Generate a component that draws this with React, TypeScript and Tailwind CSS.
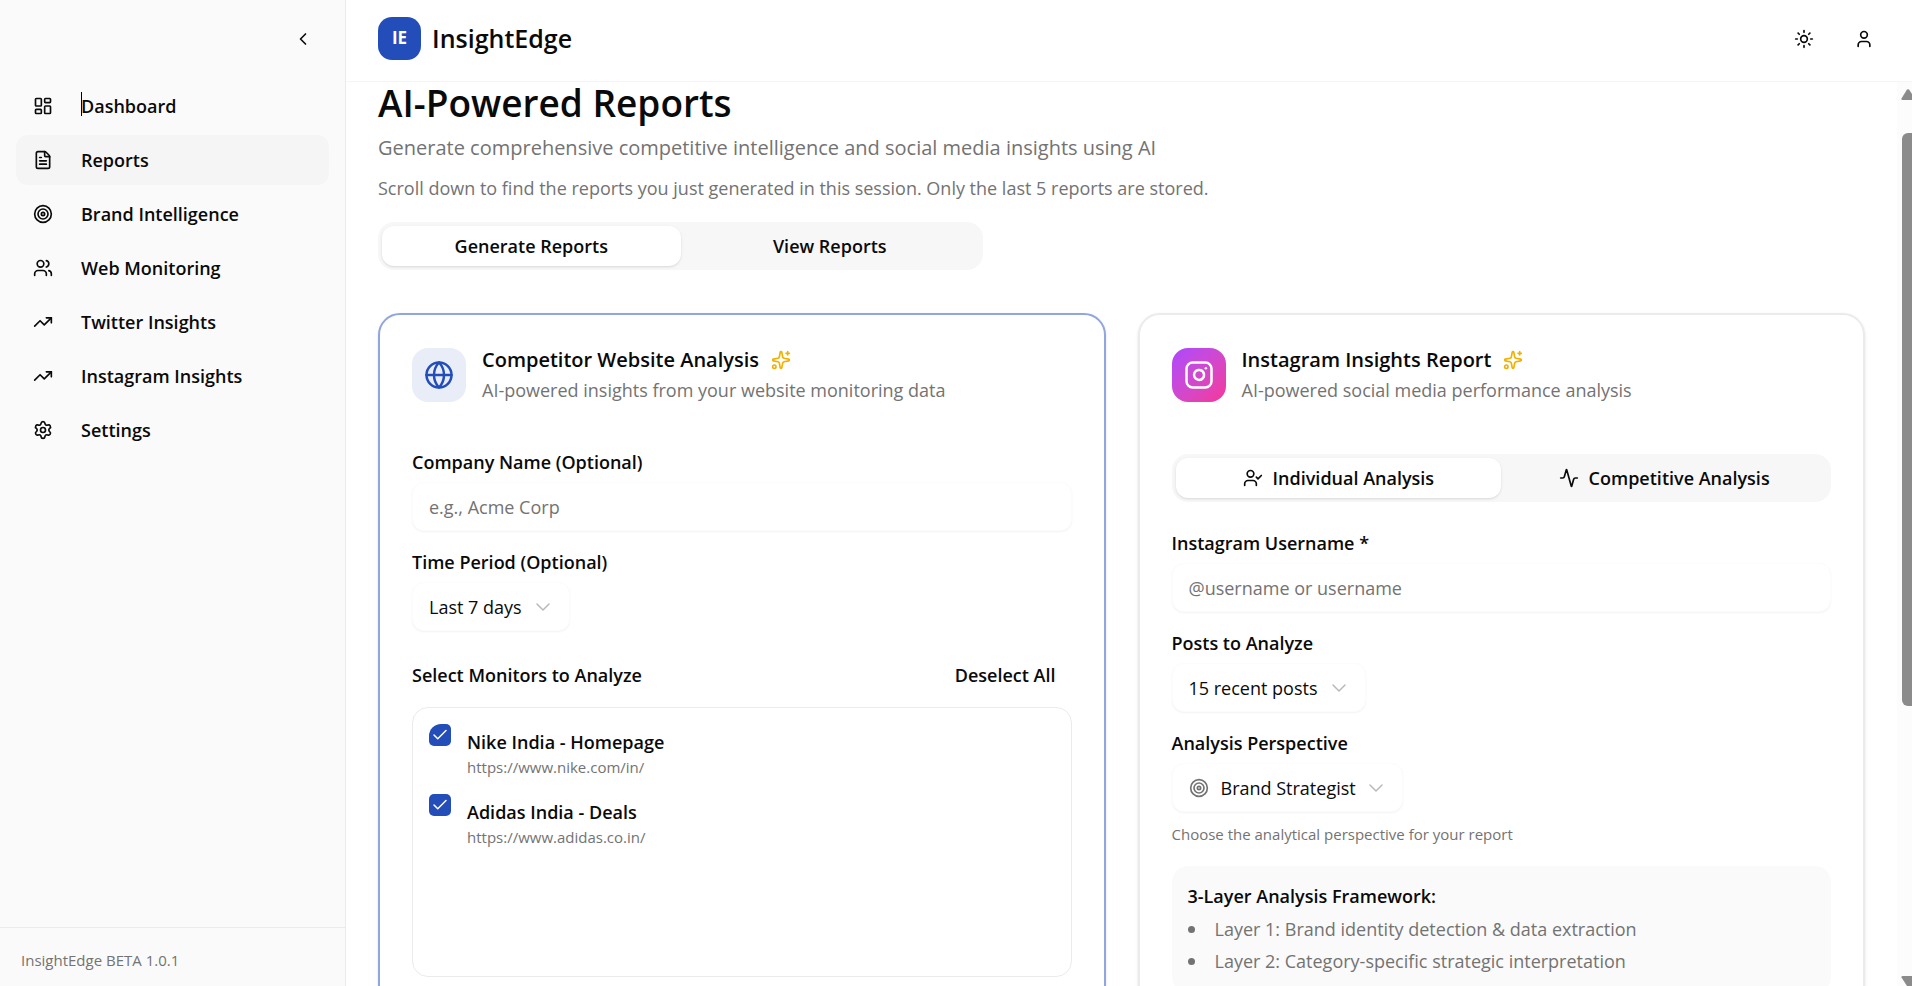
import React, { useState } from "react";
import {
  Activity,
  ChevronDown,
  ChevronLeft,
  FileText,
  Globe,
  Instagram,
  LayoutDashboard,
  Settings,
  Sparkles,
  Sun,
  Target,
  TrendingUp,
  User,
  UserCheck,
  Users,
  Check,
} from "lucide-react";
import type { LucideIcon } from "lucide-react";

const navItems: { label: string; icon: LucideIcon }[] = [
  { label: "Dashboard", icon: LayoutDashboard },
  { label: "Reports", icon: FileText },
  { label: "Brand Intelligence", icon: Target },
  { label: "Web Monitoring", icon: Users },
  { label: "Twitter Insights", icon: TrendingUp },
  { label: "Instagram Insights", icon: TrendingUp },
  { label: "Settings", icon: Settings },
];

const monitors = [
  { id: "nike", name: "Nike India - Homepage", url: "https://www.nike.com/in/" },
  { id: "adidas", name: "Adidas India - Deals", url: "https://www.adidas.co.in/" },
];

const Sidebar: React.FC = () => {
  return (
    <aside className="flex w-[346px] shrink-0 flex-col border-r border-[#ebebeb] bg-[#fafafa]">
      <div className="flex h-[81px] items-center justify-end pr-7 pb-1">
        <button aria-label="Collapse sidebar" className="p-1">
          <ChevronLeft className="size-5" />
        </button>
      </div>
      <nav className="flex flex-1 flex-col gap-1 px-4">
        {navItems.map(({ label, icon: Icon }) => (
          <a
            key={label}
            href="#"
            className={`flex h-[50px] items-center gap-7 rounded-xl px-[17px] font-semibold ${
              label === "Reports" ? "bg-[#f5f5f5]" : ""
            }`}
          >
            <Icon className="size-5" />
            <span className={label === "Dashboard" ? "relative" : ""}>
              {label === "Dashboard" && <span className="absolute left-0 top-0 h-6 w-px bg-black" />}
              {label}
            </span>
          </a>
        ))}
      </nav>
      <div className="flex h-[59px] items-center border-t border-[#ebebeb] px-[21px] pt-2 text-[15px] text-[#737373]">
        InsightEdge BETA 1.0.1
      </div>
    </aside>
  );
};

const Header: React.FC = () => {
  return (
    <header className="flex h-[82px] shrink-0 items-center justify-between border-b border-[#f5f5f5] px-8 pb-1">
      <div className="flex items-center gap-[11px]">
        <div className="flex size-[43px] items-center justify-center rounded-[14px] bg-[#234eba] text-[17px] font-bold text-white">
          IE
        </div>
        <span className="text-[25px] font-semibold">InsightEdge</span>
      </div>
      <div className="flex items-center gap-8 pr-0.5">
        <button aria-label="Toggle theme" className="p-1">
          <Sun className="size-5" />
        </button>
        <button aria-label="Account" className="p-1">
          <User className="size-5" />
        </button>
      </div>
    </header>
  );
};

type TabsProps = {
  tabs: { label: string; icon?: LucideIcon }[];
  className?: string;
};

const Tabs: React.FC<TabsProps> = ({ tabs, className = "" }) => {
  const [active, setActive] = useState(0);
  return (
    <div role="tablist" className={`grid h-12 grid-cols-2 rounded-2xl bg-[#f7f7f7] p-1 ${className}`}>
      {tabs.map(({ label, icon: Icon }, i) => (
        <button
          key={label}
          role="tab"
          aria-selected={i === active}
          onClick={() => setActive(i)}
          className={`flex items-center justify-center gap-2.5 rounded-xl font-semibold ${
            i === active ? "bg-white shadow-sm" : ""
          }`}
        >
          {Icon && <Icon className="size-5" />}
          {label}
        </button>
      ))}
    </div>
  );
};

const inputBox = "h-[49px] rounded-xl border border-[#fcfcfc] bg-white px-4 shadow-xs";

type SelectFieldProps = {
  id: string;
  label: string;
  options: string[];
  icon?: LucideIcon;
  width: string;
};

const SelectField: React.FC<SelectFieldProps> = ({ id, label, options, icon: Icon, width }) => {
  return (
    <div className="flex flex-col gap-2">
      <label htmlFor={id} className="font-semibold leading-6">
        {label}
      </label>
      <div className={`flex items-center ${inputBox} ${width}`}>
        {Icon && <Icon className="mr-3 size-5 shrink-0 text-[#737373]" />}
        <select id={id} className="min-w-0 flex-1 appearance-none bg-transparent outline-none">
          {options.map((option) => (
            <option key={option}>{option}</option>
          ))}
        </select>
        <ChevronDown className="pointer-events-none -mr-0.5 size-6 shrink-0 text-[#b9b9b9]" strokeWidth={1.5} />
      </div>
    </div>
  );
};

type CardHeaderProps = {
  title: string;
  subtitle: string;
  icon: LucideIcon;
  iconClass: string;
};

const CardHeader: React.FC<CardHeaderProps> = ({ title, subtitle, icon: Icon, iconClass }) => {
  return (
    <div className="flex items-center gap-4">
      <div className={`flex size-[54px] items-center justify-center rounded-2xl ${iconClass}`}>
        <Icon className="size-[30px]" />
      </div>
      <div>
        <h2 className="flex items-center gap-3 text-xl font-semibold leading-[30px]">
          {title}
          <Sparkles className="size-5 text-[#f0b100]" />
        </h2>
        <p className="leading-[30px] text-[#737373]">{subtitle}</p>
      </div>
    </div>
  );
};

const CompetitorCard: React.FC = () => {
  return (
    <section className="rounded-[22px] border-2 border-[#91a6dc] px-8 pt-[30px] pb-8 shadow-sm">
      <CardHeader
        title="Competitor Website Analysis"
        subtitle="AI-powered insights from your website monitoring data"
        icon={Globe}
        iconClass="bg-[#e9edf8] text-[#234eba]"
      />
      <div className="mt-[45px] flex flex-col gap-[19px]">
        <div className="flex flex-col gap-2">
          <label htmlFor="company" className="font-semibold leading-6">
            Company Name (Optional)
          </label>
          <input
            id="company"
            placeholder="e.g., Acme Corp"
            className={`w-full outline-none placeholder:text-[#737373] ${inputBox}`}
          />
        </div>
        <SelectField
          id="period"
          label="Time Period (Optional)"
          options={["Last 7 days", "Last 30 days"]}
          width="w-[158px]"
        />
      </div>
      <div className="mt-6 flex h-10 items-center justify-between">
        <h3 className="font-semibold">Select Monitors to Analyze</h3>
        <button className="px-4 font-semibold">Deselect All</button>
      </div>
      <div className="mt-3 h-[270px] overflow-hidden rounded-2xl border border-[#ebebeb] p-4">
        {monitors.map((monitor, i) => (
          <div key={monitor.id} className="flex h-[70px] gap-4">
            <div className="grid size-[22px] shrink-0 place-items-center">
              <input
                id={monitor.id}
                type="checkbox"
                defaultChecked
                className={`col-start-1 row-start-1 size-[22px] appearance-none rounded-[5px] bg-[#234eba] ${
                  i === 0 ? "rounded-tl-xl" : ""
                }`}
              />
              <Check className="pointer-events-none col-start-1 row-start-1 size-[18px] text-white" strokeWidth={2} />
            </div>
            <label htmlFor={monitor.id} className="pt-1.5">
              <span className="block font-semibold leading-[25px]">{monitor.name}</span>
              <span className="block text-[15px] leading-[25px] text-[#737373]">{monitor.url}</span>
            </label>
          </div>
        ))}
      </div>
    </section>
  );
};

const InstagramCard: React.FC = () => {
  return (
    <section className="rounded-[22px] border-2 border-[#ebebeb] px-8 pt-[30px] pb-8 shadow-sm">
      <CardHeader
        title="Instagram Insights Report"
        subtitle="AI-powered social media performance analysis"
        icon={Instagram}
        iconClass="bg-linear-to-br from-[#ad46ff] to-[#f6339a] text-white"
      />
      <Tabs
        className="mt-[49px]"
        tabs={[
          { label: "Individual Analysis", icon: UserCheck },
          { label: "Competitive Analysis", icon: Activity },
        ]}
      />
      <div className="mt-[29px] flex flex-col gap-[19px]">
        <div className="flex flex-col gap-2">
          <label htmlFor="username" className="font-semibold leading-6">
            Instagram Username *
          </label>
          <input
            id="username"
            placeholder="@username or username"
            className={`w-full outline-none placeholder:text-[#737373] ${inputBox}`}
          />
        </div>
        <SelectField
          id="posts"
          label="Posts to Analyze"
          options={["15 recent posts", "30 recent posts"]}
          width="w-[194px]"
        />
        <SelectField
          id="perspective"
          label="Analysis Perspective"
          options={["Brand Strategist", "Content Creator"]}
          icon={Target}
          width="w-[231px]"
        />
      </div>
      <p className="mt-2.5 text-[15px] leading-6 text-[#737373]">Choose the analytical perspective for your report</p>
      <div className="mt-5 rounded-2xl bg-[#fafafa] p-4">
        <h3 className="font-semibold leading-7">3-Layer Analysis Framework:</h3>
        <ul className="mt-[3px] text-[#737373]">
          {[
            "Layer 1: Brand identity detection & data extraction",
            "Layer 2: Category-specific strategic interpretation",
          ].map((layer) => (
            <li key={layer} className="flex h-8 items-center gap-5">
              <span className="size-[7px] rounded-full bg-[#737373]" />
              {layer}
            </li>
          ))}
        </ul>
      </div>
    </section>
  );
};

const ScrollTrack: React.FC = () => {
  return (
    <div aria-hidden="true" className="flex w-[15px] shrink-0 flex-col items-end bg-[#fcfcfc] pt-[7px]">
      <svg viewBox="0 0 11 11" className="h-[11px] w-[11px] fill-[#8b8b8b]">
        <path d="M6 0.5Q7 0 8 0.5L11 5V11H1.5Q0 11 0.5 9.5Z" />
      </svg>
      <div className="mt-[33px] h-[573px] w-[10px] rounded-l-[6px] bg-[#8b8b8b]" />
      <svg viewBox="0 0 11 10" className="mt-auto h-[10px] w-[11px] fill-[#8b8b8b]">
        <path d="M0.5 1.5Q0 0 1.5 0H11V10H6Z" />
      </svg>
    </div>
  );
};

const App: React.FC = () => {
  return (
    <div className="flex h-screen overflow-hidden bg-white font-['Open_Sans','Noto_Sans',sans-serif] text-lg text-[#0a0a0a]">
      <Sidebar />
      <div className="flex min-w-0 flex-1 flex-col">
        <Header />
        <div className="flex min-h-0 flex-1">
          <main className="min-w-0 flex-1 px-8">
            <h1 className="text-[37px] font-semibold leading-[42px]">AI-Powered Reports</h1>
            <p className="mt-1.5 text-xl leading-9 text-[#737373]">
              Generate comprehensive competitive intelligence and social media insights using AI
            </p>
            <p className="mt-2 leading-7 text-[#737373]">
              Scroll down to find the reports you just generated in this session. Only the last 5 reports are stored.
            </p>
            <Tabs
              className="mt-5 max-w-[605px]"
              tabs={[{ label: "Generate Reports" }, { label: "View Reports" }]}
            />
            <div className="mt-[43px] grid grid-cols-2 gap-8">
              <CompetitorCard />
              <InstagramCard />
            </div>
          </main>
          <ScrollTrack />
        </div>
      </div>
    </div>
  );
};

export default App;
